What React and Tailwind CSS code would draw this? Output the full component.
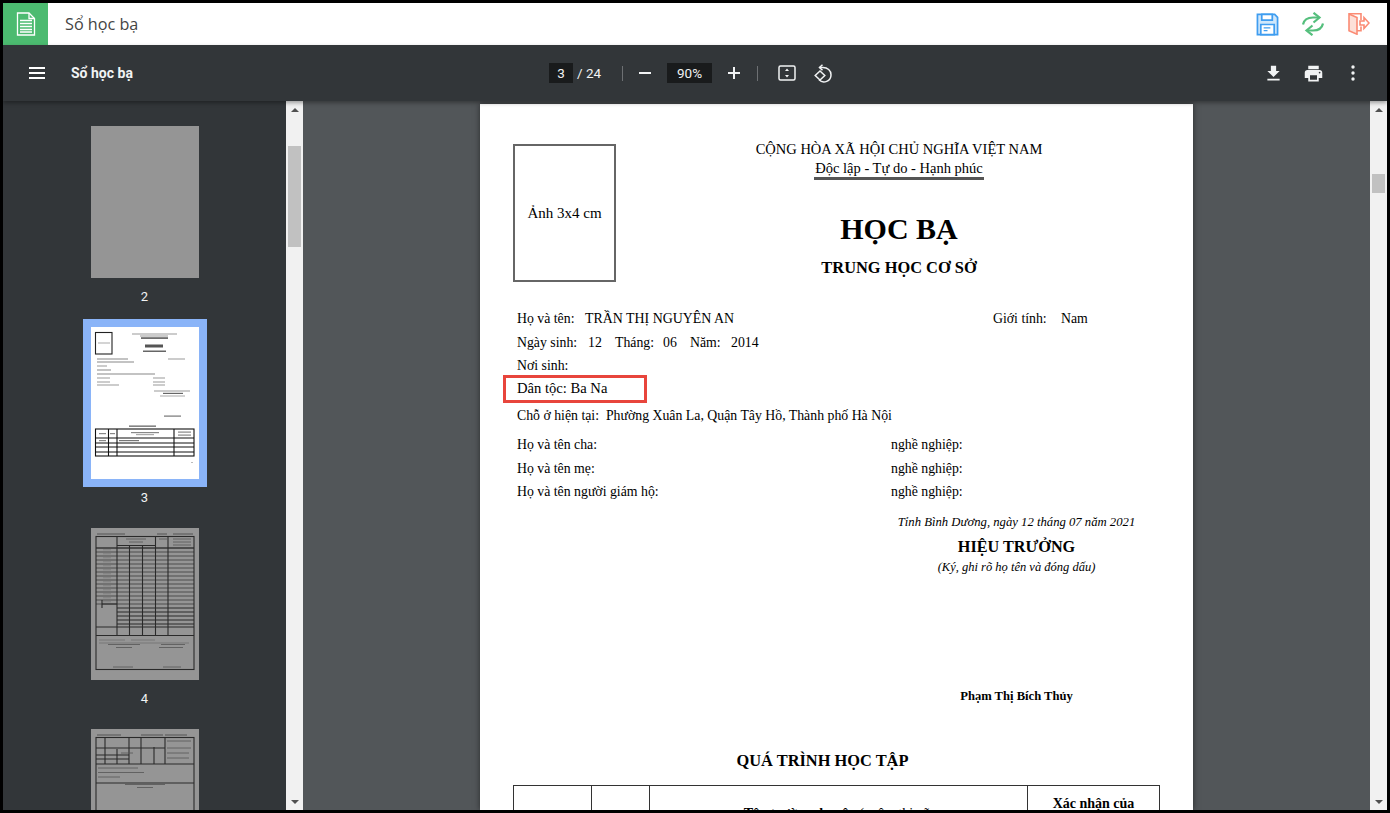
import React from "react";

const serif = "font-['Liberation_Serif','Noto_Sans',serif]";

const DocIcon = () => (
  <svg width="20" height="24" viewBox="0 0 20 24" fill="none" stroke="#fff" strokeWidth="1.3">
    <path d="M1.5 1h11.5l5.5 5.5V23h-17z" fill="#4cbb70" />
    <path d="M13 1v5.5h5.5" />
    <path d="M4 8.5h12M4 11.5h12M4 14.5h12M4 17.5h12M4 20h12" strokeWidth="1.5" />
  </svg>
);

const SaveIcon = () => (
  <svg width="23" height="23" viewBox="0 0 24 24" fill="none" stroke="#3f9df0" strokeWidth="1.8">
    <path d="M1.5 1.5h18l3 3v18h-21z" fill="#cfe7fb" />
    <path d="M6 1.5h11v6H6z" fill="#fff" />
    <path d="M5 12h14v10.5H5z" fill="#fff" />
    <path d="M8 15.5h7M8 18.5h4" strokeWidth="1.3" />
  </svg>
);

const SyncIcon = () => (
  <svg width="24" height="24" viewBox="0 0 24 24" fill="none" stroke="#55bf7d" strokeWidth="2.2">
    <path d="M2 12.500C3 7.500 7 5.500 12 5.500h6" />
    <path d="M12.500 .8 18.500 5.500 12.500 10.500" />
    <path d="M22 11.500c-1 5-5 7-10 7H6" />
    <path d="M11.500 13.500 5.500 18.500 11.500 23.200" />
  </svg>
);

const ExitIcon = () => (
  <svg width="22" height="22" viewBox="0 0 22 22" fill="none" stroke="#fb8b74" strokeWidth="1.6">
    <path d="M1 1 9 4.500v16.700L1 17.800z" fill="#fde0d8" />
    <path d="M13 7V.8H1M13 13.500v4.300H9" />
    <path d="M12 8h4V4.500l5 5.500-5 5.500V12h-4z" />
  </svg>
);

const Thumb2 = () => <div className="w-[108px] h-[152px] bg-[#959595]" />;

const Thumb3 = () => (
  <svg width="108" height="152" viewBox="0 0 108 152" className="block">
    <rect width="108" height="152" fill="#fff" />
    <g className="blur-[0.3px]">
      <rect x="4.500" y="5.500" width="16.500" height="21.500" fill="none" stroke="#222" strokeWidth="1.100" />
      <rect x="7" y="15.500" width="12" height="1" fill="#aaa" />
      <rect x="41" y="6.500" width="45" height="1" fill="#999" />
      <rect x="49" y="8.500" width="28" height="1" fill="#999" />
      <rect x="50" y="10.500" width="27" height="1.100" fill="#111" />
      <rect x="54" y="17.500" width="18" height="3" fill="#555" />
      <rect x="52" y="23.500" width="23" height="1.500" fill="#666" />
      <rect x="6" y="31.500" width="31" height="1" fill="#888" /><rect x="77" y="31.500" width="17" height="1" fill="#999" />
      <rect x="6" y="34.500" width="37" height="1" fill="#888" />
      <rect x="6" y="38.500" width="10" height="1" fill="#999" />
      <rect x="6" y="42.500" width="14" height="1" fill="#888" />
      <rect x="6" y="46.500" width="58" height="1" fill="#888" />
      <rect x="6" y="50.500" width="13" height="1" fill="#999" /><rect x="62" y="50.500" width="12" height="1" fill="#999" />
      <rect x="6" y="54.500" width="13" height="1" fill="#999" /><rect x="62" y="54.500" width="12" height="1" fill="#999" />
      <rect x="6" y="57.500" width="22" height="1" fill="#999" /><rect x="62" y="57.500" width="12" height="1" fill="#999" />
      <rect x="63" y="63.500" width="36" height="1" fill="#999" />
      <rect x="72" y="65.800" width="20" height="1.200" fill="#666" />
      <rect x="69" y="68.500" width="25" height="1" fill="#aaa" />
      <rect x="73" y="88.500" width="17" height="1.200" fill="#777" />
      <rect x="38" y="98.500" width="27" height="1.300" fill="#666" />
      <g fill="none" stroke="#111" strokeWidth="1.100">
        <rect x="4.500" y="102" width="98.500" height="27" />
        <path d="M17.500 102v27M26 102v27M83 102v27M4.500 111h98.500M4.500 116h98.500M4.500 120h98.500M4.500 125h98.500" />
      </g>
      <rect x="8" y="106" width="7" height="1.200" fill="#888" />
      <rect x="19" y="106" width="5" height="1.200" fill="#888" />
      <rect x="40" y="105" width="28" height="1.200" fill="#888" />
      <rect x="45" y="107" width="18" height="1.200" fill="#aaa" />
      <rect x="87" y="104.500" width="13" height="1.200" fill="#888" />
      <rect x="87" y="107.500" width="13" height="1.200" fill="#888" />
      <rect x="8" y="113" width="7" height="1.200" fill="#888" />
      <rect x="28" y="113" width="20" height="1.200" fill="#777" />
      <rect x="100" y="135" width="2" height="1" fill="#bbb" />
    </g>
  </svg>
);

const Thumb4 = () => {
  const rows = [];
  for (let y = 20; y <= 96; y += 4) rows.push(y);
  return (
    <svg width="108" height="152" viewBox="0 0 108 152" className="block">
      <rect width="108" height="152" fill="#959595" />
      <g className="blur-[0.3px]">
        <rect x="6" y="5.500" width="28" height="1" fill="#555" /><rect x="66" y="5.500" width="10" height="1" fill="#555" /><rect x="82" y="5.500" width="20" height="1" fill="#555" />
        <g fill="none" stroke="#2a2a2a" strokeWidth="1.100">
          <rect x="5" y="8.500" width="98" height="133" />
          <path d="M26 8.500v99M38.500 17.500v90M51.500 17.500v90M64.500 8.500v99M77 8.500v99M5 20h98M26 17.500h38.500" />
          {rows.map((y) => (
            <path key={y} d={`M${y > 78 ? 26 : 5} ${y}h${y > 78 ? 77 : 98}`} strokeOpacity={y > 76 ? 1 : 0.65} />
          ))}
          <path d="M5 99h98M5 107.500h98M11 72v8M11 76h15" />
        </g>
        {rows.slice(0, 14).map((y) => (
          <rect key={y} x="12" y={y + 1.500} width="8" height=".7" fill="#777" />
        ))}
        <path d="M35 11h20M38 14h14M68 11h8M82 11h18M82 14h18M82 17h18" stroke="#555" strokeWidth=".8" />
        <path d="M8 112h26M40 112h24M8 115h90" stroke="#666" strokeWidth=".6" />
        <path d="M17 116.500h32M70 116.500h24M25 119.500h16M68 119.500h24M22 139h20M72 139h18" stroke="#555" strokeWidth=".8" />
      </g>
    </svg>
  );
};

const Thumb5 = () => (
  <svg width="108" height="152" viewBox="0 0 108 152" className="block">
    <rect width="108" height="152" fill="#959595" />
    <g className="blur-[0.3px]">
      <rect x="6" y="5.500" width="24" height="1" fill="#555" /><rect x="50" y="5.500" width="22" height="1" fill="#555" /><rect x="74" y="5.500" width="22" height="1" fill="#555" />
      <g fill="none" stroke="#2a2a2a" strokeWidth="1.100">
        <rect x="5" y="8.500" width="98" height="143" />
        <path d="M14 8.500v27M38 8.500v27M50 8.500v27M63 18v17M74 8.500v27M26 20v15M5 19h69M5 26h33M5 30h33M5 35h98M5 54h98" />
      </g>
      <path d="M7 39h40M7 43.500h46M7 48h22M76 12h24M76 19h24M76 24h22M76 29h22M30 24h12" stroke="#555" strokeWidth=".8" />
      <path d="M34 55.500h40M46 58.500h16" stroke="#555" strokeWidth=".8" />
    </g>
  </svg>
);

const ThumbItem = ({ label, selected, children }) => (
  <div className="flex flex-col items-center shrink-0">
    <div className={`border-8 ${selected ? "border-[#8ab4f8]" : "border-transparent"}`}>{children}</div>
    <div className="h-[22px] flex items-center text-[13px] text-[#f1f3f4]">{label}</div>
    <div className="h-[11px]" />
  </div>
);

const ScrollBar = ({ thumbClass }) => (
  <div className="w-[17px] h-full bg-[#f1f1f1] flex flex-col items-center shrink-0">
    <div className="h-[17px] flex items-center justify-center shrink-0">
      <div className="w-0 h-0 border-l-4 border-r-4 border-b-[4px] border-l-transparent border-r-transparent border-b-[#505050]" />
    </div>
    <div className={`w-[13px] bg-[#c1c1c1] ${thumbClass}`} />
    <div className="flex-1" />
    <div className="h-[17px] flex items-center justify-center shrink-0">
      <div className="w-0 h-0 border-l-4 border-r-4 border-t-[4px] border-l-transparent border-r-transparent border-t-[#505050]" />
    </div>
  </div>
);

const Sep = () => <div className="w-px h-[15px] bg-[#6d7073]" />;

const Toolbar = () => (
  <div className="relative z-10 h-[56px] bg-[#323639] shadow-[0_2px_4px_rgba(0,0,0,0.35)] flex items-center text-[#f1f3f4] font-['Roboto',sans-serif] shrink-0">
    <div className="w-[286px] flex items-center shrink-0">
      <div className="ml-[26px] w-[16px] flex flex-col gap-[3px]">
        <div className="h-[2px] bg-white" />
        <div className="h-[2px] bg-white" />
        <div className="h-[2px] bg-white" />
      </div>
      <div className="ml-[26px] text-[14px] font-bold">Sổ học bạ</div>
    </div>
    <div className="flex items-center text-[13.500px]">
      <div className="ml-[260px] w-[24px] h-[20px] bg-[#191b1c] flex items-center justify-center">3</div>
      <div className="ml-[4px] w-[25px] whitespace-nowrap">/ 24</div>
      <div className="ml-[20px]"><Sep /></div>
      <div className="ml-[16px] w-[12px] h-[2px] bg-[#f1f3f4]" />
      <div className="ml-[16px] w-[45px] h-[20px] bg-[#191b1c] flex items-center justify-center">90%</div>
      <svg className="ml-[16px]" width="12" height="12" viewBox="0 0 12 12" fill="#f1f3f4"><path d="M5 0h2v5h5v2H7v5H5V7H0V5h5z" /></svg>
      <div className="ml-[17px]"><Sep /></div>
      <svg className="ml-[20px]" width="18" height="16" viewBox="0 0 18 16" fill="none">
        <rect x="1" y="1" width="16" height="14" rx="1.500" stroke="#f1f3f4" strokeWidth="1.500" />
        <path d="M9 3.500 11 6H7zM9 12.500 11 10H7z" fill="#f1f3f4" />
      </svg>
      <svg className="ml-[18px]" width="18" height="19" viewBox="0 0 18 19" fill="none" stroke="#f1f3f4" strokeWidth="1.500">
        <path d="M5.500 3.500h3.500c4.500 0 8 3 8 7.300a7 7 0 0 1-12 5" />
        <path d="M8.500 .8 5.500 3.500l3 2.800" />
        <path d="M6 7 1.200 11.500 6 16l4.800-4.500z" />
      </svg>
    </div>
    <div className="flex-1" />
    <div className="flex items-center">
      <svg width="21" height="21" viewBox="0 0 24 24" fill="#f1f3f4"><path d="M19 9h-4V3H9v6H5l7 7 7-7zM5 18v2h14v-2H5z" /></svg>
      <svg className="ml-[19px]" width="21" height="21" viewBox="0 0 24 24" fill="#f1f3f4"><path d="M19 8H5c-1.660 0-3 1.340-3 3v6h4v4h12v-4h4v-6c0-1.660-1.340-3-3-3zm-3 11H8v-5h8v5zm3-7c-.55 0-1-.45-1-1s.45-1 1-1 1 .45 1 1-.45 1-1 1zm-1-9H6v4h12V3z" /></svg>
      <svg className="ml-[17px] mr-[22px]" width="24" height="24" viewBox="0 0 24 24" fill="#f1f3f4"><circle cx="12" cy="6" r="1.700" /><circle cx="12" cy="12" r="1.700" /><circle cx="12" cy="18" r="1.700" /></svg>
    </div>
  </div>
);

const Row = ({ className, children }) => (
  <div className={`h-[24px] flex items-center pl-[4px] whitespace-pre text-[13.800px] ${className || ""}`}>{children}</div>
);

const Page = () => (
  <div className={`relative w-[713px] shrink-0 mt-[3px] bg-white pt-[40px] px-[33px] text-black text-[14px] ${serif} shadow-[0_0_6px_rgba(0,0,0,0.5)]`}>
    <div className="flex">
      <div className="w-[103px] h-[138px] border-2 border-[#666] flex items-center justify-center text-[15px] pt-[1px]">Ảnh 3x4 cm</div>
      <div className="ml-[22px] flex-1 flex flex-col items-center -mt-[4px]">
        <div className="h-[19px] leading-[18px] text-[14.500px]">CỘNG HÒA XÃ HỘI CHỦ NGHĨA VIỆT NAM</div>
        <div className="h-[21px] leading-[19px] text-[14.500px] border-b-[3px] border-[#555] px-[1px]">Độc lập - Tự do - Hạnh phúc</div>
        <div className="mt-[29px] h-[40px] leading-[40px] text-[30px] font-bold">HỌC BẠ</div>
        <div className="mt-[7px] h-[22px] leading-[24px] text-[16.400px] font-bold">TRUNG HỌC CƠ SỞ</div>
      </div>
    </div>
    <div className="mt-[25px]">
      <Row>
        <span className="w-[68px]">Họ và tên:</span>
        <span className="w-[408px] text-[13.900px]">TRẦN THỊ NGUYÊN AN</span>
        <span className="w-[68px]">Giới tính:</span>
        <span>Nam</span>
      </Row>
      <Row>
        <span className="w-[71px]">Ngày sinh:</span>
        <span className="w-[27px]">12</span>
        <span className="w-[48px]">Tháng:</span>
        <span className="w-[27px]">06</span>
        <span className="w-[41px]">Năm:</span>
        <span>2014</span>
      </Row>
      <Row className="-mt-[1px]">Nơi sinh:</Row>
      <Row className="-mt-[1px] text-[14.600px]">Dân tộc: Ba Na</Row>
      <Row className="mt-[3px]">{"Chỗ ở hiện tại:  Phường Xuân La, Quận Tây Hồ, Thành phố Hà Nội"}</Row>
      <Row className="mt-[5px]"><span className="w-[374px]">Họ và tên cha:</span><span>nghề nghiệp:</span></Row>
      <Row><span className="w-[374px]">Họ và tên mẹ:</span><span>nghề nghiệp:</span></Row>
      <Row className="-mt-[1px]"><span className="w-[374px]">Họ và tên người giám hộ:</span><span>nghề nghiệp:</span></Row>
    </div>
    <div className="mt-[6px] ml-auto mr-[25px] w-[237px] flex flex-col items-center">
      <div className="h-[24px] leading-[24px] italic text-[12.700px] whitespace-nowrap">Tỉnh Bình Dương, ngày 12 tháng 07 năm 2021</div>
      <div className="h-[24px] leading-[26px] font-bold text-[16.200px] whitespace-nowrap">HIỆU TRƯỞNG</div>
      <div className="h-[18px] leading-[18px] italic text-[12.500px] whitespace-nowrap">(Ký, ghi rõ họ tên và đóng dấu)</div>
      <div className="mt-[110px] h-[20px] leading-[20px] font-bold text-[12.600px] whitespace-nowrap">Phạm Thị Bích Thủy</div>
    </div>
    <div className="mt-[42px] mr-[28px] h-[24px] leading-[26px] text-center font-bold text-[16.400px]">QUÁ TRÌNH HỌC TẬP</div>
    <div className="mt-[13px] flex border border-[#333] h-[110px]">
      <div className="w-[78px] border-r border-[#333]" />
      <div className="w-[58px] border-r border-[#333]" />
      <div className="w-[378px] border-r border-[#333] pt-[17px] text-center text-[14px]">
        <span className="font-bold">Tên trường, huyện</span> (quận, thị xã,
      </div>
      <div className="flex-1 pt-[7px] text-center font-bold text-[14px]">Xác nhận của</div>
    </div>
    <div className="absolute left-[23px] top-[271px] w-[144px] h-[28px] border-[3px] border-[#e8453c]" />
    <div className="h-[40px]" />
  </div>
);

export default function App() {
  return (
    <div className="w-[1390px] h-[813px] box-border border-[3px] border-black flex flex-col overflow-hidden bg-white">
      <div className="h-[42px] flex items-center shrink-0 bg-white">
        <div className="w-[45px] h-full bg-[#4cbb70] flex items-center justify-center"><DocIcon /></div>
        <div className="ml-[17px] text-[16.200px] text-[#444] font-['Open_Sans',sans-serif]">Sổ học bạ</div>
        <div className="flex-1" />
        <SaveIcon />
        <div className="ml-[22px]"><SyncIcon /></div>
        <div className="ml-[23px] mr-[17px]"><ExitIcon /></div>
      </div>
      <Toolbar />
      <div className="flex-1 flex min-h-0">
        <div className="w-[283px] h-full bg-[#323639] pt-[17px] flex flex-col items-center overflow-hidden font-['Roboto',sans-serif] shrink-0">
          <ThumbItem label="2"><Thumb2 /></ThumbItem>
          <ThumbItem label="3" selected><Thumb3 /></ThumbItem>
          <ThumbItem label="4"><Thumb4 /></ThumbItem>
          <ThumbItem label="5"><Thumb5 /></ThumbItem>
        </div>
        <ScrollBar thumbClass="mt-[28px] h-[101px]" />
        <div className="flex-1 h-full bg-[#525659] flex justify-center overflow-hidden min-w-0">
          <Page />
        </div>
        <ScrollBar thumbClass="mt-[56px] h-[19px]" />
      </div>
    </div>
  );
}
